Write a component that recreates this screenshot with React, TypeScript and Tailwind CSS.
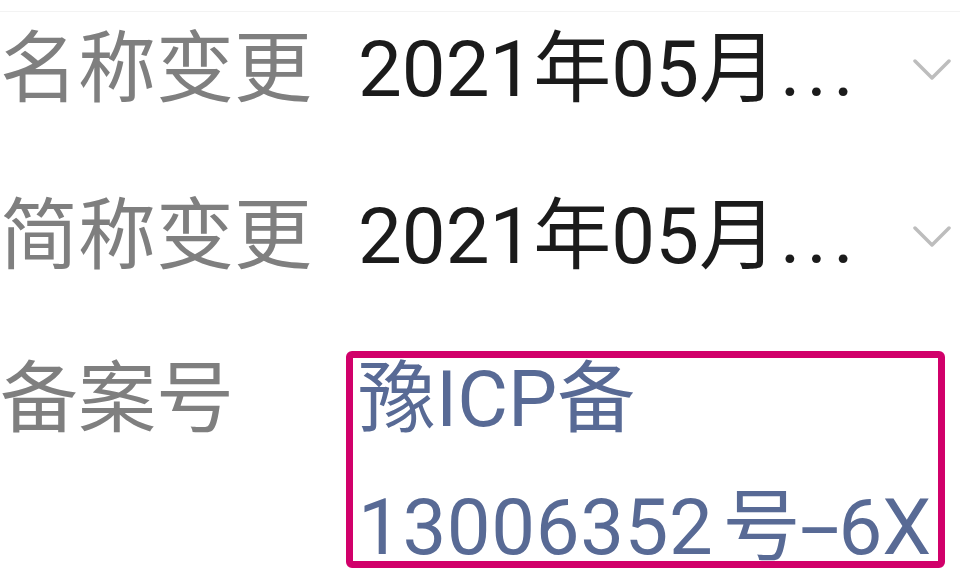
import React from "react";

function Chevron() {
  return (
    <svg width="38" height="22" viewBox="0 0 38 22" className="shrink-0">
      <path d="M2 2 L19 19 L36 2" fill="none" stroke="#bdbdbd" strokeWidth="3.5" strokeLinecap="round" strokeLinejoin="round" />
    </svg>
  );
}

function DateValue() {
  return (
    <div className="w-[512px] whitespace-nowrap overflow-hidden text-[#1b1b1b] leading-[1.2]">
      2021年05月<span className="inline-block w-[78px] pl-[3px] tracking-[6px]">...</span>
    </div>
  );
}

export default function App() {
  return (
    <div
      className="relative w-[960px] h-[570px] overflow-hidden bg-white text-[78px]"
      style={{ fontFamily: "Roboto, 'Noto Sans CJK SC', sans-serif" }}
    >
      <div className="h-[11px]" />
      <div className="h-px bg-[#f3f3f3]" />

      <div className="flex items-center h-[116px]">
        <div className="w-[358px] shrink-0 text-[#7f7f7f] leading-none">名称变更</div>
        <DateValue />
        <div className="ml-auto mr-[9px] flex items-center">
          <Chevron />
        </div>
      </div>

      <div className="flex items-center h-[116px] mt-[51px]">
        <div className="w-[358px] shrink-0 text-[#7f7f7f] leading-none">简称变更</div>
        <DateValue />
        <div className="ml-auto mr-[9px] flex items-center">
          <Chevron />
        </div>
      </div>

      <div className="flex items-start mt-[41px] leading-[128px]">
        <div className="w-[358px] shrink-0 text-[#7f7f7f]">备案号</div>
        <div className="w-[590px] text-[#586a95]">
          豫ICP备<span className="tracking-[0.6px]">13006352</span><span className="ml-[9px]">号</span>
          <span className="inline-block w-[38px] text-center">
            <span className="inline-block scale-x-[1.85]">-</span>
          </span>
          6X
        </div>
      </div>

      <div className="absolute left-[346px] top-[351px] w-[599px] h-[217px] border-[7px] border-[#d1006a] rounded-[6px]" />
    </div>
  );
}
